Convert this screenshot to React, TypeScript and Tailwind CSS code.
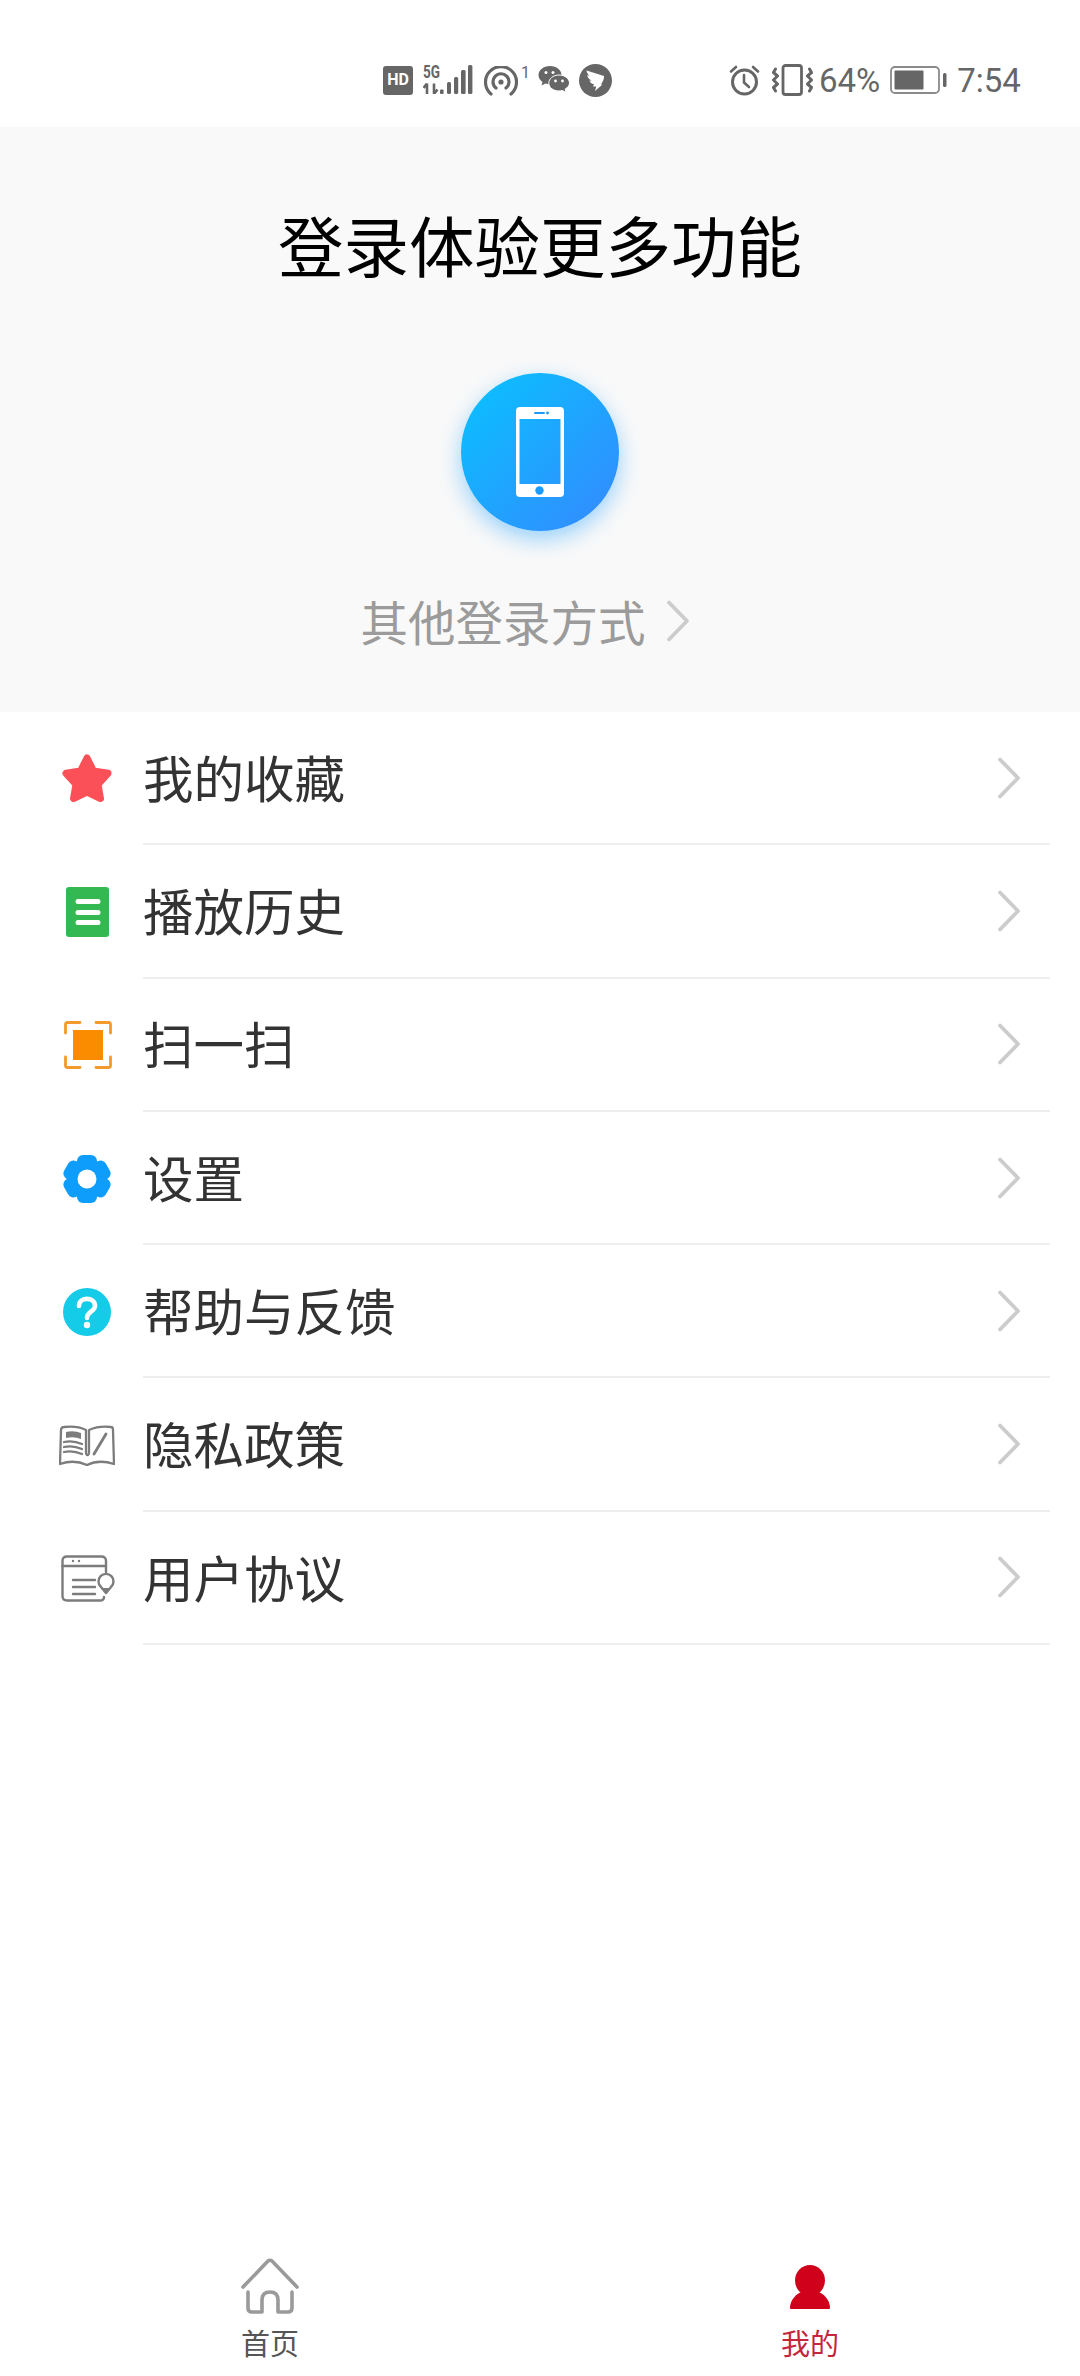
const Chevron = ({ className = "" }: { className?: string }) => (
  <svg width="26" height="44" viewBox="0 0 26 44" fill="none" className={className}>
    <path d="M5 3.5 L23 22 L5 40.5" stroke="#cccccc" strokeWidth="3.8" strokeLinecap="round" strokeLinejoin="round" />
  </svg>
);

const Star = () => (
  <svg width="52" height="50" viewBox="0 0 52 50">
    <polygon points="26,4 32.5,17 47,19.3 37,30.3 39.5,44.5 26,38 12.5,44.5 15,30.3 5,19.3 19.5,17" fill="#fb5057" stroke="#fb5057" strokeWidth="7" strokeLinejoin="round" />
  </svg>
);

const Doc = () => (
  <svg width="43" height="50" viewBox="0 0 43 50">
    <rect x="0" y="0" width="43" height="50" rx="3" fill="#34b852" />
    <rect x="9.5" y="12" width="25" height="5" rx="2.5" fill="#fff" />
    <rect x="9.5" y="23" width="25" height="5" rx="2.5" fill="#fff" />
    <rect x="9.5" y="33" width="25" height="5" rx="2.5" fill="#fff" />
  </svg>
);

const Scan = () => (
  <svg width="48" height="48" viewBox="0 0 48 48" fill="none" className="ml-[2px]">
    <path d="M1.5 12 V3.5 Q1.5 1.5 3.5 1.5 H16 M32 1.5 H44.5 Q46.5 1.5 46.5 3.5 V12 M46.5 36 V44.5 Q46.5 46.5 44.5 46.5 H32 M16 46.5 H3.5 Q1.5 46.5 1.5 44.5 V36" stroke="#f39a2a" strokeWidth="2.8" strokeLinecap="round" />
    <rect x="9" y="9" width="30" height="30" fill="#fb8c00" />
  </svg>
);

const Gear = () => (
  <svg width="50" height="48" viewBox="0 0 50 48">
    <g fill="#0f9dfb">
      <circle cx="25" cy="24" r="18.5" />
      <rect x="15" y="0" width="20" height="48" rx="6" />
      <rect x="15" y="0" width="20" height="48" rx="6" transform="rotate(60 25 24)" />
      <rect x="15" y="0" width="20" height="48" rx="6" transform="rotate(-60 25 24)" />
    </g>
    <circle cx="25" cy="24" r="9.5" fill="#fff" />
  </svg>
);

const Help = () => (
  <svg width="48" height="48" viewBox="0 0 48 48" fill="none">
    <circle cx="24" cy="24" r="24" fill="#14cbe8" />
    <path d="M16 18 C16 8.5 32 8.5 32 18 C32 23.5 24 23.5 24 30" stroke="#fff" strokeWidth="4.6" strokeLinecap="round" />
    <circle cx="24" cy="37" r="3.2" fill="#fff" />
  </svg>
);

const Book = () => (
  <svg width="56" height="41" viewBox="0 0 56 41" fill="none" stroke="#7c7c7c" strokeWidth="2.3" strokeLinecap="round" strokeLinejoin="round">
    <path d="M1 39 L2 5 Q2 2 5 2 Q18 0.5 27 5 V27 Q27 30 28.5 30 Q30 30 30 27 V5 Q40 0.5 52 2 Q54 2 54 5 L55 39 Q40 34 28 40 Q15 34 1 39 Z" />
    <path d="M7 7 Q15 5 22 8 V14 Q15 11 7 13 Z" fill="#7c7c7c" stroke="none" />
    <path d="M5 17 Q14 15 23 19 M5 22 Q14 20 23 24 M5 27 Q14 25 23 29" />
    <path d="M47 9 L35 29" strokeWidth="2.8" />
  </svg>
);

const Terminal = () => (
  <svg width="54" height="47" viewBox="0 0 54 47" fill="none" stroke="#7c7c7c" strokeWidth="2.4" strokeLinecap="round" strokeLinejoin="round" className="ml-[2px]">
    <path d="M45 17 V6 Q45 1.5 40 1.5 H6 Q1.5 1.5 1.5 6 V41 Q1.5 45.5 6 45.5 H39 Q43 45.5 43 42" />
    <path d="M1.5 11 H45" />
    <path d="M12 25 H34 M12 32 H34 M12 39 H34" />
    <circle cx="12" cy="6" r="1.2" fill="#7c7c7c" stroke="none" />
    <circle cx="18" cy="6" r="1.2" fill="#7c7c7c" stroke="none" />
    <path d="M45 38 L40 32 A7.5 7.5 0 1 1 50 32 Z" fill="#fff" />
    <path d="M45 39 L40 33 H50 Z" fill="#7c7c7c" stroke="none" />
  </svg>
);

const rows = [
  { icon: <Star />, label: "我的收藏" },
  { icon: <Doc />, label: "播放历史" },
  { icon: <Scan />, label: "扫一扫" },
  { icon: <Gear />, label: "设置" },
  { icon: <Help />, label: "帮助与反馈" },
  { icon: <Book />, label: "隐私政策" },
  { icon: <Terminal />, label: "用户协议" },
];

const Signal = () => (
  <svg width="50" height="34" viewBox="0 -4 50 34" fill="#666">
    <text x="0" y="14" fontSize="19" fontWeight="700" fontFamily="Roboto, sans-serif" textLength="17" lengthAdjust="spacingAndGlyphs">5G</text>
    <path d="M4 19.5 V30 M0.5 24 L4 19.5 M11 19.5 V30 M11 30 L14.5 25.5" stroke="#666" strokeWidth="2.6" fill="none" />
    <rect x="17" y="25.5" width="3.6" height="4.5" rx="1" />
    <rect x="24" y="18" width="4" height="12" rx="1.5" />
    <rect x="31" y="13" width="4.2" height="17" rx="1.5" />
    <rect x="38" y="6" width="4.6" height="24" rx="1.5" />
    <rect x="45" y="1" width="4.4" height="29" rx="1.5" />
  </svg>
);

const Hotspot = () => (
  <svg width="34" height="30" viewBox="0 0 34 30" fill="none" stroke="#666" strokeWidth="3.2" strokeLinecap="round">
    <path d="M7 28 A15.5 15.5 0 1 1 27 28" />
    <path d="M12 22 A8 8 0 1 1 22 22" />
    <circle cx="17" cy="16" r="2.6" fill="#666" stroke="none" />
  </svg>
);

const WeChat = () => (
  <svg width="32" height="30" viewBox="0 0 32 30">
    <path d="M12 1 C5.5 1 0.5 5 0.5 10 C0.5 13 2 15.3 4.5 17 L3.5 20.5 L7.5 18.5 C9 19 10.5 19.2 12 19.2 C18.5 19.2 23.5 15 23.5 10 C23.5 5 18.5 1 12 1 Z" fill="#666" />
    <path d="M21 10 C14.8 10 10.8 14 10.8 18 C10.8 22.3 15 26 21 26 C22.2 26 23.4 25.8 24.5 25.5 L28 27.5 L27.2 24 C29.8 22.5 31.5 20.4 31.5 18 C31.5 14 27 10 21 10 Z" fill="#666" stroke="#fff" strokeWidth="1" />
    <circle cx="8" cy="7.5" r="1.5" fill="#fff" />
    <circle cx="15" cy="7.5" r="1.5" fill="#fff" />
    <circle cx="17.5" cy="16" r="1.4" fill="#fff" />
    <circle cx="24.5" cy="16" r="1.4" fill="#fff" />
  </svg>
);

const Ding = () => (
  <svg width="33" height="33" viewBox="0 0 33 33">
    <circle cx="16.5" cy="16.5" r="16.5" fill="#666" />
    <path d="M7.5 6.5 L25 12 C25.3 15 23.8 18 21.8 20.5 L23.5 20.5 L16 27 L17.2 22.5 L14 22.5 L15 20.3 C12.5 19.8 11 18.5 10.4 16.5 L12.5 16.8 C10 15.3 8.6 13 8.2 11.2 L10.5 11.8 C8.8 10.4 7.8 8.5 7.5 6.5 Z" fill="#fff" />
  </svg>
);

const Alarm = () => (
  <svg width="31" height="31" viewBox="0 0 31 31" fill="none" stroke="#666" strokeLinecap="round" strokeLinejoin="round">
    <circle cx="15.5" cy="17" r="12" strokeWidth="3" />
    <path d="M15 10 V17.5 L20 22" strokeWidth="2.6" />
    <path d="M2 6.5 L7 2 M29 6.5 L24 2" strokeWidth="2.6" />
  </svg>
);

const Vibrate = () => (
  <svg width="41" height="32" viewBox="0 0 41 32" fill="none" stroke="#666" strokeLinecap="round" strokeLinejoin="round">
    <rect x="11" y="1.5" width="18.5" height="29" rx="2.5" strokeWidth="2.8" />
    <path d="M3.5 5 L1.5 8.5 L5.5 12 L1.5 16 L5.5 20 L1.5 23.5 L3.5 27" strokeWidth="3" />
    <path d="M37.5 5 L39.5 8.5 L35.5 12 L39.5 16 L35.5 20 L39.5 23.5 L37.5 27" strokeWidth="3" />
  </svg>
);

const Battery = () => (
  <svg width="58" height="28" viewBox="0 0 58 28" fill="none">
    <rect x="1" y="1" width="48" height="26" rx="4" stroke="#8a8a8a" strokeWidth="1.8" />
    <rect x="4.5" y="4.5" width="29" height="19" rx="1" fill="#666" />
    <rect x="53" y="7" width="3.5" height="14" rx="1.5" fill="#666" />
  </svg>
);

const PhoneGlyph = () => (
  <svg width="48" height="90" viewBox="0 0 48 90">
    <path fillRule="evenodd" d="M4 0 H44 Q48 0 48 4 V86 Q48 90 44 90 H4 Q0 90 0 86 V4 Q0 0 4 0 Z M3.5 12 V77 H44.5 V12 Z" fill="#fff" />
    <rect x="18" y="5" width="11" height="2" rx="1" fill="#1b9bfd" />
    <circle cx="31.5" cy="6" r="1.4" fill="#1b9bfd" />
    <circle cx="23.5" cy="83.5" r="4.2" fill="#1b9bfd" />
  </svg>
);

const House = () => (
  <svg width="58" height="56" viewBox="0 0 58 56" fill="none" stroke="#9a9a9a" strokeWidth="3.6" strokeLinecap="round" strokeLinejoin="round">
    <path d="M2 29 L27 3 Q29 1.5 31 3 L56 29" />
    <path d="M7 34 V50 Q7 54 11 54 H21 V42 Q21 34 29 34 Q37 34 37 42 V54 H47 Q51 54 51 50 V34" />
  </svg>
);

const Person = () => (
  <svg width="40" height="44" viewBox="0 0 40 44">
    <ellipse cx="20" cy="15.5" rx="15" ry="15.5" fill="#d0021b" />
    <path d="M0 43 C0 35 6 28.5 14 26 H26 C34 28.5 40 35 40 43 Q40 44 39 44 H1 Q0 44 0 43 Z" fill="#d0021b" />
  </svg>
);

export default function App() {
  return (
    <div className="flex h-[2376px] w-[1080px] flex-col overflow-hidden bg-white font-['Noto_Sans_CJK_SC',sans-serif]">
      <div className="flex h-[127px] shrink-0 items-start pt-[62px]">
        <div className="ml-[383px] flex h-[36px] items-center">
          <div className="flex h-[29px] w-[30px] items-center justify-center rounded-[3px] bg-[#666] font-['Roboto',sans-serif] text-[16px] font-bold leading-none text-white">HD</div>
          <div className="ml-[10px] mb-[6px]"><Signal /></div>
          <div className="ml-[11px] mt-[2px]"><Hotspot /></div>
          <div className="ml-[3px] mb-[14px] font-['Roboto',sans-serif] text-[16px] leading-none text-[#666]">1</div>
          <div className="ml-[8px]"><WeChat /></div>
          <div className="ml-[9px]"><Ding /></div>
        </div>
        <div className="ml-[117px] flex h-[36px] items-center">
          <Alarm />
          <div className="ml-[12px]"><Vibrate /></div>
          <div className="ml-[6px] font-['Roboto',sans-serif] text-[33px] leading-none text-[#666]">64%</div>
          <div className="ml-[10px]"><Battery /></div>
          <div className="ml-[9px] font-['Roboto',sans-serif] text-[33px] leading-none text-[#666]">7:54</div>
        </div>
      </div>

      <div className="flex h-[585px] shrink-0 flex-col items-center bg-[#f9f9f9]">
        <div className="mt-[75px] text-[65.5px] leading-[84px] text-black">登录体验更多功能</div>
        <div className="mt-[87px] flex h-[158px] w-[158px] items-center justify-center rounded-full bg-[linear-gradient(135deg,#08c3ff,#3588ff)] shadow-[0_8px_22px_rgba(30,160,255,0.45)]">
          <PhoneGlyph />
        </div>
        <div className="mr-[30px] mt-[58px] flex items-center gap-[18px]">
          <span className="text-[47.5px] leading-[64px] text-[#9b9b9b]">其他登录方式</span>
          <Chevron />
        </div>
      </div>

      <div className="flex flex-col">
        {rows.map((r) => (
          <div key={r.label} className="flex h-[133.3px] items-center pl-[57px]">
            <div className="flex w-[60px] shrink-0 items-center justify-center">{r.icon}</div>
            <div className="ml-[26px] mr-[30px] flex h-full flex-1 items-center justify-between border-b-2 border-[#eeeeee] pr-[29px]">
              <span className="mb-[3px] text-[50.5px] leading-none text-[#333]">{r.label}</span>
              <Chevron />
            </div>
          </div>
        ))}
      </div>

      <div className="mt-auto flex h-[126px] shrink-0">
        <div className="flex flex-1 flex-col items-center pt-[8px]">
          <House />
          <span className="mt-[8px] text-[29px] leading-[40px] text-[#555]">首页</span>
        </div>
        <div className="flex flex-1 flex-col items-center pt-[15px]">
          <Person />
          <span className="mt-[13px] text-[29px] leading-[40px] text-[#c4263c]">我的</span>
        </div>
      </div>
    </div>
  );
}
